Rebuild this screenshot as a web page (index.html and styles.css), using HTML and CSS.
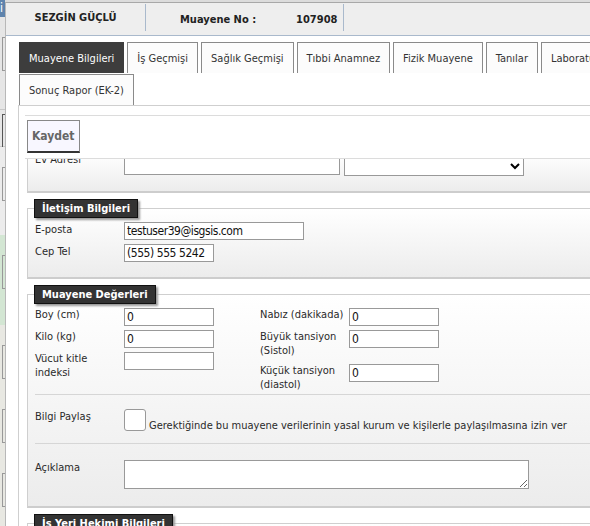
FILE: index.html
```html
<!DOCTYPE html>
<html lang="tr">
<head>
    <meta charset="UTF-8">
    <title>Muayene Bilgileri</title>
    <link rel="stylesheet" href="styles.css">
</head>
<body>

<div class="screen">
    <!-- arka plandaki sayfanın görünen kenarı -->
    <div class="page-edge">
        <div class="edge edge-blue">i</div>
        <div class="edge edge-gray h93"><span class="edge-box"></span></div>
        <div class="edge edge-gray h37"><span class="edge-box dark"></span></div>
        <div class="edge edge-light h88"><span class="edge-box"></span></div>
        <div class="edge edge-green h90"><span class="edge-box"></span></div>
        <div class="edge edge-warm h200"><span class="edge-box"></span><span class="edge-box"></span><span class="edge-box"></span></div>
    </div>

    <div class="modal">
        <div class="modal-header">
            <div class="hdr-name">SEZGİN GÜÇLÜ</div>
            <div class="hdr-no">
                <span>Muayene No :</span>
                <span class="hdr-value">107908</span>
            </div>
        </div>

        <ul class="tabs">
            <li class="tab active">Muayene Bilgileri</li>
            <li class="tab">İş Geçmişi</li>
            <li class="tab">Sağlık Geçmişi</li>
            <li class="tab">Tıbbi Anamnez</li>
            <li class="tab">Fizik Muayene</li>
            <li class="tab">Tanılar</li>
            <li class="tab">Laboratuvar</li>
            <li class="tab">Sonuç Rapor (EK-2)</li>
        </ul>

        <div class="panel">
            <div class="toolbar">
                <button type="button" class="btn-save">Kaydet</button>
            </div>

            <div class="scroller">
                <div class="scroll-inner">
                    <fieldset class="box">
                        <div class="row">
                            <label class="lbl lbl-up">Ev Adresi</label>
                            <input type="text" class="inp inp-addr">
                            <select class="sel"></select>
                        </div>
                    </fieldset>

                    <fieldset class="box">
                        <legend>İletişim Bilgileri</legend>
                        <div class="row">
                            <label class="lbl">E-posta</label>
                            <input type="text" class="inp inp-wide" value="testuser39@isgsis.com">
                        </div>
                        <div class="row">
                            <label class="lbl">Cep Tel</label>
                            <input type="text" class="inp" value="(555) 555 5242">
                        </div>
                    </fieldset>

                    <fieldset class="box">
                        <legend>Muayene Değerleri</legend>
                        <div class="section values">
                            <div class="col">
                                <div class="row">
                                    <label class="lbl">Boy (cm)</label>
                                    <input type="text" class="inp" value="0">
                                </div>
                                <div class="row">
                                    <label class="lbl">Kilo (kg)</label>
                                    <input type="text" class="inp" value="0">
                                </div>
                                <div class="row">
                                    <label class="lbl">Vücut kitle indeksi</label>
                                    <input type="text" class="inp">
                                </div>
                            </div>
                            <div class="col">
                                <div class="row">
                                    <label class="lbl">Nabız (dakikada)</label>
                                    <input type="text" class="inp" value="0">
                                </div>
                                <div class="row">
                                    <label class="lbl">Büyük tansiyon (Sistol)</label>
                                    <input type="text" class="inp" value="0">
                                </div>
                                <div class="row">
                                    <label class="lbl">Küçük tansiyon (diastol)</label>
                                    <input type="text" class="inp" value="0">
                                </div>
                            </div>
                        </div>
                        <div class="section share">
                            <div class="row">
                                <label class="lbl">Bilgi Paylaş</label>
                                <input type="checkbox" class="chk">
                                <span class="chk-text">Gerektiğinde bu muayene verilerinin yasal kurum ve kişilerle paylaşılmasına izin ver</span>
                            </div>
                        </div>
                        <div class="section last">
                            <div class="row">
                                <label class="lbl">Açıklama</label>
                                <textarea class="txt"></textarea>
                            </div>
                        </div>
                    </fieldset>

                    <fieldset class="box">
                        <legend>İş Yeri Hekimi Bilgileri</legend>
                        <div class="row">
                            <label class="lbl">Hekim</label>
                            <input type="text" class="inp inp-wide">
                        </div>
                    </fieldset>
                </div>
            </div>
        </div>
    </div>
</div>

</body>
</html>
```

FILE: styles.css
```css
html, body {
    margin: 0;
    height: 100%;
    overflow: hidden;
}
body {
    font-family: "DejaVu Sans Condensed", "DejaVu Sans", sans-serif;
    font-size: 11px;
    color: #2a2a2a;
    background: #dcdcdc;
}
.screen {
    display: flex;
    height: 526px;
}

/* arka plan sayfa kenarı */
.page-edge {
    width: 5px;
    flex: none;
    display: flex;
    flex-direction: column;
    overflow: hidden;
}
.edge {
    flex: none;
    display: flex;
    flex-direction: column;
    gap: 30px;
    padding-top: 20px;
    box-sizing: border-box;
}
.edge-blue {
    height: 17px;
    padding: 0;
    background: #5f84ad;
    color: #fff;
    font-size: 12px;
    line-height: 17px;
}
.edge-gray { background: #e6e6e6; border-bottom: 1px solid #c8c8c8; }
.edge-light { background: #ececec; }
.edge-green { background: #d3e6d3; }
.edge-warm { background: #e8e8e2; flex: 1; }
.h93 { height: 93px; }
.h37 { height: 37px; padding-top: 4px; }
.h88 { height: 88px; }
.h90 { height: 90px; }
.h200 { height: 200px; }
.edge-box {
    display: block;
    height: 32px;
    margin-left: 2px;
    border: 1px solid #999;
    border-right: none;
    flex: none;
}
.edge-box.dark { border-color: #555; border-bottom-width: 2px; }

/* modal */
.modal {
    width: 780px;
    flex: none;
    margin-top: 2px;
    background: #fff;
    border-top: 1px solid #a8a8a8;
    border-left: 1px solid #b8b8b8;
}
.modal-header {
    display: flex;
    height: 32px;
    background: #eeeeee;
    border-bottom: 1px solid #a9b9cc;
    font-weight: bold;
    font-size: 11px;
    color: #222;
}
.hdr-name {
    width: 139px;
    text-align: center;
    line-height: 28px;
    margin-top: 1px;
    height: 27px;
    border-right: 1px solid #a9b9cc;
}
.hdr-no {
    display: flex;
    padding-left: 34px;
    padding-right: 6px;
    margin-top: 1px;
    height: 27px;
    line-height: 31px;
    border-right: 1px solid #a9b9cc;
}
.hdr-value {
    margin-left: 40px;
}

/* sekmeler */
.tabs {
    list-style: none;
    margin: 0;
    padding: 6px 0 0 13px;
    display: flex;
    flex-wrap: wrap;
    gap: 1px 3px;
    width: 660px;
}
.tab {
    height: 30px;
    line-height: 31px;
    padding: 0 9px;
    border: 1px solid #8a8a8a;
    border-bottom: none;
    background: #fcfcfc;
    color: #333;
}
.tab.active {
    background: #3d3d3d;
    border-color: #3d3d3d;
    color: #fff;
}

/* içerik paneli */
.panel {
    margin-left: 12px;
    border-top: 1px solid #cfcfcf;
    border-left: 1px solid #cfcfcf;
    padding: 9px 0 0 6px;
}
.toolbar {
    border-top: 1px solid #dcdcdc;
    border-bottom: 1px solid #dcdcdc;
    padding: 4px 2px 5px;
}
.btn-save {
    font-family: inherit;
    font-size: 12px;
    font-weight: bold;
    color: #666;
    height: 33px;
    padding: 0 4px;
    background: #f8f7ff;
    border: 1px solid #888;
    border-bottom: 2px solid #333;
    border-radius: 0;
}
.scroller {
    height: 400px;
    overflow: hidden;
    padding-left: 2px;
}
.scroll-inner {
    margin-top: -7px;
}

/* fieldset kutuları */
.box {
    margin: 0 0 6px;
    padding: 0 6px 15px 7px;
    border: 1px solid #cfcfcf;
    border-bottom: 2px solid #cdcdcd;
    background: linear-gradient(#ffffff, #ececec);
    min-width: 0;
}
.box legend {
    margin-left: -1px;
    padding: 2px 7px;
    background: #333;
    color: #fff;
    font-weight: bold;
    font-size: 11px;
    border: 1px solid #111;
    box-shadow: 2px 2px 2px #999;
}
.row {
    display: flex;
    align-items: flex-start;
    margin-top: 4px;
}
.lbl {
    width: 89px;
    flex: none;
    line-height: 14px;
    padding-top: 1px;
}
.lbl-up {
    margin-top: -5px;
}
.values .lbl {
    padding-top: 0;
    margin-bottom: 2px;
}
.inp {
    width: 90px;
    height: 18px;
    box-sizing: border-box;
    padding: 1px 2px;
    border: 1px solid #999;
    font-family: inherit;
    font-size: 12px;
    letter-spacing: -0.45px;
    color: #111;
    background: #fff;
}
.inp-wide { width: 180px; }
.inp-addr { width: 216px; }
.sel {
    width: 180px;
    height: 19px;
    margin-left: 4px;
    border: 1px solid #999;
    background: #fff;
}

.section {
    border-bottom: 1px solid #d6d6d6;
}
.section.values {
    display: flex;
    gap: 46px;
    padding: 0;
}
.section.share {
    padding: 10px 0 11px;
}
.section.last {
    border-bottom: none;
    padding: 12px 0 2px;
}
.chk {
    appearance: none;
    margin: 0;
    width: 22px;
    height: 22px;
    border: 1px solid #999;
    border-radius: 3px;
    background: #fff;
}
.chk-text {
    margin-left: 3px;
    margin-top: 10px;
    line-height: 13px;
}
.txt {
    width: 405px;
    height: 29px;
    box-sizing: border-box;
    border: 1px solid #999;
    margin: 0;
    resize: both;
}
```
